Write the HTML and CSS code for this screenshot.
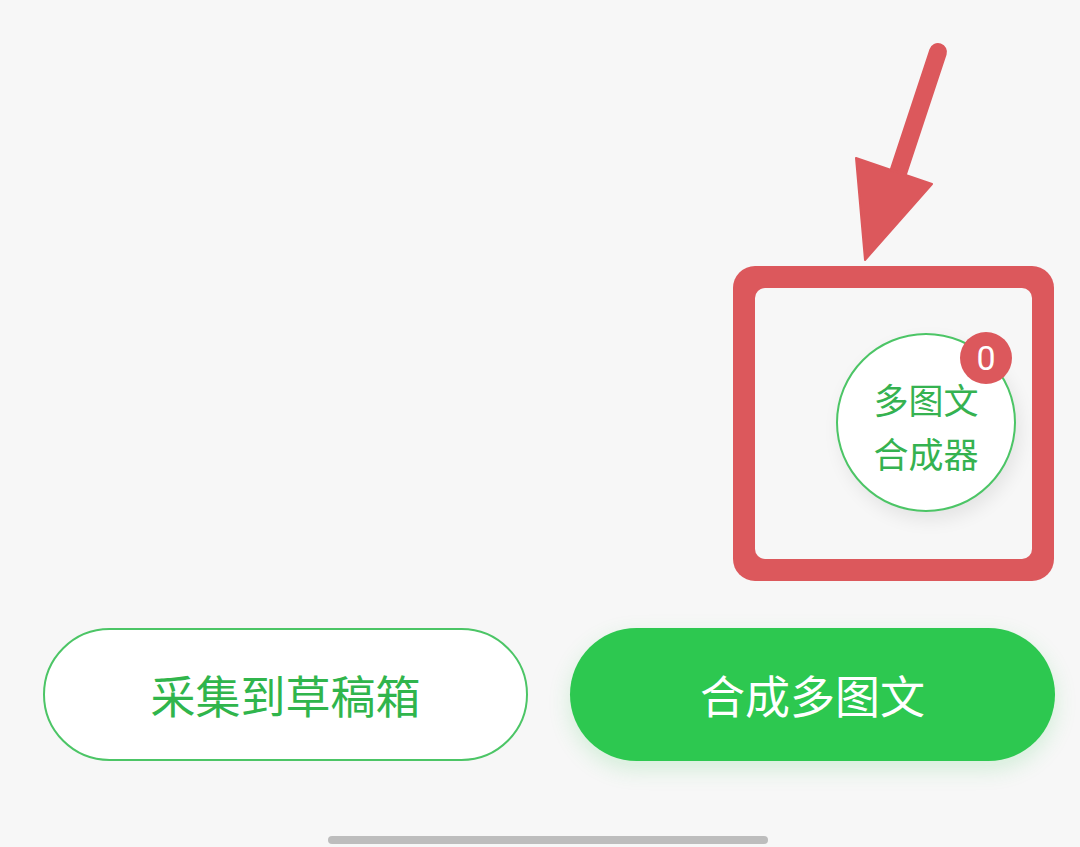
FILE: index.html
```html
<!DOCTYPE html>
<html lang="zh">
<head>
<meta charset="utf-8">
<title>多图文合成器</title>
<link rel="stylesheet" href="styles.css">
</head>
<body>
<div class="screen">
  <svg class="arrow" width="1080" height="300" viewBox="0 0 1080 300">
    <line x1="938" y1="52" x2="897" y2="176" stroke="#dc585c" stroke-width="18" stroke-linecap="round"/>
    <polygon points="856,158 932,184 865,260" fill="#dc585c" stroke="#dc585c" stroke-width="2" stroke-linejoin="round"/>
  </svg>
  <div class="highlight"></div>
  <div class="fab">
    <span class="fab-text">多图文<br>合成器</span>
    <span class="badge">0</span>
  </div>
  <div class="actions">
    <button class="btn btn-outline">采集到草稿箱</button>
    <button class="btn btn-solid">合成多图文</button>
  </div>
  <div class="home-bar"></div>
</div>
</body>
</html>
```
FILE: styles.css
```css
* { box-sizing: border-box; }
html, body { margin: 0; padding: 0; }
body {
  background: #f7f7f7;
  font-family: "Noto Sans CJK SC", "Noto Sans", sans-serif;
}
.screen {
  position: relative;
  width: 1080px;
  height: 847px;
  display: flex;
  flex-direction: column;
  justify-content: flex-end;
  align-items: stretch;
  overflow: hidden;
}
.arrow {
  position: absolute;
  left: 0;
  top: 0;
}
.highlight {
  position: absolute;
  left: 733px;
  top: 266px;
  width: 321px;
  height: 315px;
  border-radius: 22px;
  background: #dc585c;
}
.highlight::after {
  content: "";
  position: absolute;
  inset: 22px;
  border-radius: 10px;
  background: #f7f7f7;
}
.fab {
  position: absolute;
  left: 836px;
  top: 333px;
  width: 180px;
  height: 179px;
  border-radius: 50%;
  background: #ffffff;
  border: 2px solid #4cc566;
  box-shadow: 4px 8px 18px rgba(0, 0, 0, 0.08);
  display: flex;
  align-items: center;
  justify-content: center;
}
.fab-text {
  color: #35b250;
  font-size: 35px;
  line-height: 54px;
  text-align: center;
  padding-top: 6px;
}
.badge {
  position: absolute;
  left: 122px;
  top: -3px;
  width: 52px;
  height: 52px;
  border-radius: 50%;
  background: #dc585c;
  color: #ffffff;
  font-family: "Roboto", "Noto Sans", sans-serif;
  font-size: 34px;
  line-height: 52px;
  text-align: center;
}
.actions {
  display: flex;
  gap: 42px;
  padding: 0 25px 0 43px;
}
.btn {
  width: 485px;
  height: 133px;
  border-radius: 67px;
  font-family: "Noto Sans CJK SC", "Noto Sans", sans-serif;
  font-size: 45px;
  line-height: 1;
  padding: 0;
  cursor: pointer;
  display: flex;
  align-items: center;
  justify-content: center;
}
.btn-outline {
  background: #ffffff;
  border: 2px solid #4cc566;
  color: #30b54c;
}
.btn-solid {
  background: #2dc850;
  border: none;
  color: #ffffff;
  box-shadow: 0 8px 22px rgba(45, 200, 80, 0.18);
}
.home-bar {
  align-self: center;
  margin: 75px 0 3px 16px;
  width: 440px;
  height: 8px;
  border-radius: 4px;
  background: #bdbdbd;
}
```
